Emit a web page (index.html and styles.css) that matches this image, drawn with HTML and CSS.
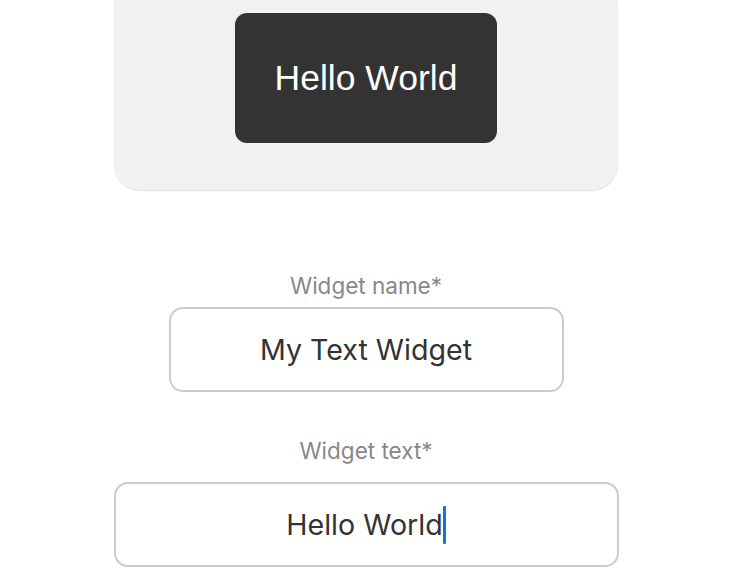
FILE: index.html
```html
<!DOCTYPE html>
<html lang="en">
<head>
  <meta charset="UTF-8">
  <meta name="viewport" content="width=device-width, initial-scale=1.0">
  <title>Text Widget</title>
  <link rel="stylesheet" href="styles.css">
</head>
<body>
  <!-- Preview -->
  <section class="preview">
    <div class="widget-box">Hello World</div>
  </section>

  <!-- Form -->
  <form class="widget-form">
    <label class="field-label" for="widgetName">Widget name*</label>
    <div class="field field-name" id="widgetName">My Text Widget</div>

    <label class="field-label label-text" for="widgetText">Widget text*</label>
    <div class="field field-text" id="widgetText">Hello World<span class="caret"></span></div>
  </form>
</body>
</html>
```
FILE: styles.css
```css
body {
  font-family: Inter, "Open Sans", sans-serif;
  margin: 0;
  padding: 0;
  background: #fff;
  color: #333;
  display: flex;
  flex-direction: column;
  align-items: center;
}
.preview {
  width: 504px;
  height: 190px;
  box-sizing: border-box;
  padding-top: 13px;
  background-color: #f1f1f1;
  border-radius: 0 0 26px 26px;
  box-shadow: 0 1px 1px rgba(0, 0, 0, 0.12);
  display: flex;
  justify-content: center;
  align-items: flex-start;
}
.widget-box {
  width: 262px;
  height: 130px;
  background-color: #333;
  border-radius: 12px;
  color: #fff;
  font-family: "Liberation Sans", Arial, sans-serif;
  font-size: 35.5px;
  display: flex;
  justify-content: center;
  align-items: center;
}
.widget-form {
  display: flex;
  flex-direction: column;
  align-items: center;
  margin-top: 84px;
}
.field-label {
  color: #888;
  font-size: 22.5px;
  line-height: 24px;
  margin-bottom: 9px;
}
.label-text {
  margin-bottom: 19px;
}
.field {
  box-sizing: border-box;
  height: 85px;
  border: 2px solid #ccc;
  border-radius: 14px;
  display: flex;
  justify-content: center;
  align-items: center;
  font-size: 28.6px;
  color: #333;
}
.field-name {
  width: 395px;
  margin-bottom: 47px;
}
.field-text {
  width: 505px;
}
.caret {
  display: inline-block;
  width: 3px;
  height: 38px;
  margin-left: 0;
  background-color: #1a6fd8;
  border-radius: 1px;
}
```
